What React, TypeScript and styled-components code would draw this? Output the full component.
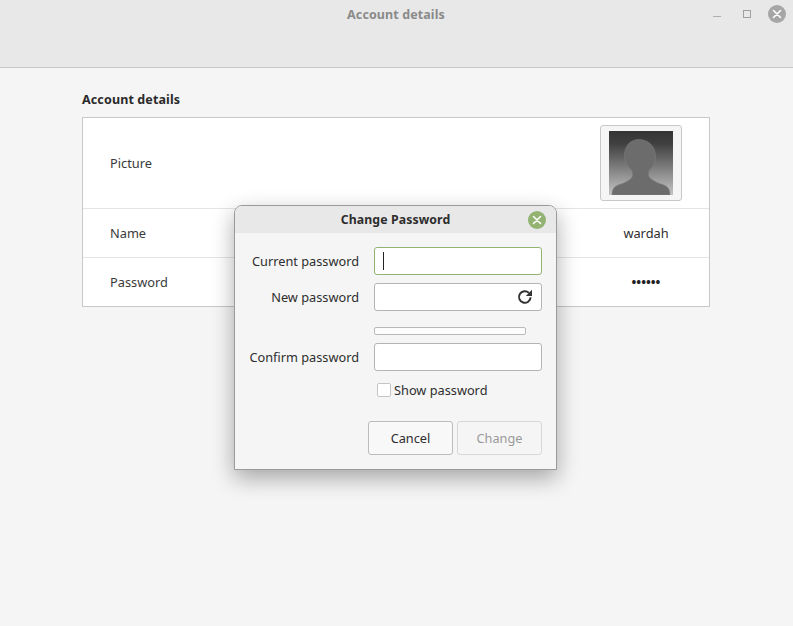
import React from "react";
import styled, { createGlobalStyle } from "styled-components";

const Global = createGlobalStyle`
  html, body { margin: 0; padding: 0; }
  body { font-family: "Noto Sans", "Open Sans", sans-serif; font-size: 13px; color: #2e2e2e; background: #f5f5f5; }
`;

const Page = styled.div`
  position: relative;
  width: 793px;
  height: 626px;
  overflow: hidden;
  background: #f5f5f5;
`;

const TitleBar = styled.header`
  height: 67px;
  background: #e8e8e8;
  border-bottom: 1px solid #c8c8c8;
  display: grid;
  grid-template-columns: 1fr auto 1fr;
  align-items: start;
`;

const WindowTitle = styled.div`
  grid-column: 2;
  margin-top: 6px;
  margin-right: 1px;
  font-weight: 700;
  font-size: 12.5px;
  line-height: 18px;
  letter-spacing: 0.1px;
  color: #8a8a8a;
`;

const WindowControls = styled.div`
  grid-column: 3;
  justify-self: end;
  display: flex;
  align-items: center;
  gap: 16px;
  margin: 5px 7px 0 0;
`;

const Content = styled.main`
  padding: 23px 83px 0 82px;
`;

const SectionTitle = styled.h2`
  margin: 0 0 8px;
  font-size: 12.5px;
  line-height: 18px;
  letter-spacing: 0.13px;
  font-weight: 700;
  color: #2a2a2a;
`;

const List = styled.section`
  background: #fff;
  border: 1px solid #c8c8c8;
`;

const Row = styled.div<{ $h: number }>`
  height: ${(p) => p.$h}px;
  display: flex;
  align-items: center;
  justify-content: space-between;
  padding: 0 27px;
  & + & { border-top: 1px solid #e4e4e4; }
`;

const RowLabel = styled.span`
  font-size: 12.8px;
  color: #3a3a3a;
`;

const RowValue = styled.span`
  width: 72px;
  text-align: center;
  font-size: 12.8px;
  color: #2e2e2e;
`;

const Dots = styled(RowValue)`
  font-weight: 700;
  color: #222;
`;

const AvatarButton = styled.div`
  width: 82px;
  height: 76px;
  box-sizing: border-box;
  border: 1px solid #c8c8c8;
  border-radius: 3px;
  background: #f5f5f5;
  display: flex;
  align-items: center;
  justify-content: center;
`;

const Dialog = styled.div`
  position: absolute;
  left: 234px;
  top: 205px;
  width: 323px;
  height: 265px;
  box-sizing: border-box;
  border: 1px solid #9a9a9a;
  border-radius: 8px 8px 0 0;
  background: #f5f5f5;
  box-shadow: 0 8px 22px rgba(0, 0, 0, 0.33);
  display: flex;
  flex-direction: column;
`;

const DialogHeader = styled.div`
  height: 27px;
  flex: none;
  background: #e8e8e8;
  border-radius: 7px 7px 0 0;
  position: relative;
  display: flex;
  align-items: center;
  justify-content: center;
  font-weight: 700;
  font-size: 12.3px;
  letter-spacing: 0.1px;
  color: #2e2e2e;
`;

const DialogClose = styled.svg`
  position: absolute;
  right: 10px;
  top: 5px;
`;

const Form = styled.div`
  display: grid;
  grid-template-columns: 124px 168px;
  column-gap: 15px;
  justify-content: start;
  padding: 14px 0 0 0;
  align-items: center;
`;

const Label = styled.label`
  text-align: right;
  font-size: 12.75px;
  color: #2e2e2e;
`;

const Input = styled.div<{ $focus?: boolean }>`
  position: relative;
  height: 28px;
  box-sizing: border-box;
  background: #fff;
  border: 1px solid ${(p) => (p.$focus ? "#92b372" : "#b4b4b4")};
  border-radius: 3px;
  display: flex;
  align-items: center;
  justify-content: space-between;
  padding: 0 8px;
`;

const Caret = styled.span`
  width: 1px;
  height: 18px;
  background: #222;
`;

const RowGap = styled.div<{ $h: number }>`
  grid-column: 1 / -1;
  height: ${(p) => p.$h}px;
`;

const Strength = styled.div`
  grid-column: 2;
  width: 152px;
  height: 8px;
  box-sizing: border-box;
  background: #fcfcfc;
  border: 1px solid #b9b9b9;
  border-radius: 2px;
`;

const CheckRow = styled.label`
  grid-column: 2;
  display: flex;
  align-items: center;
  gap: 3px;
  padding-left: 3px;
  font-size: 12.75px;
  color: #2e2e2e;
  height: 18px;
`;

const CheckBox = styled.span`
  width: 14px;
  height: 14px;
  box-sizing: border-box;
  background: #fff;
  border: 1px solid #c4c4c4;
  border-radius: 2px;
`;

const Actions = styled.div`
  display: flex;
  justify-content: flex-end;
  gap: 4px;
  padding: 22px 14px 0 0;
`;

const Button = styled.button<{ $disabled?: boolean }>`
  width: 85px;
  height: 34px;
  box-sizing: border-box;
  font-family: inherit;
  font-size: 12.75px;
  border-radius: 3px;
  border: 1px solid ${(p) => (p.$disabled ? "#d8d8d8" : "#bcbcbc")};
  color: ${(p) => (p.$disabled ? "#9a9a9a" : "#2e2e2e")};
  background: ${(p) => (p.$disabled ? "#f5f5f5" : "#f8f8f8")};
  padding: 0;
`;

export default function App() {
  return (
    <Page>
      <Global />
      <TitleBar>
        <WindowTitle>Account details</WindowTitle>
        <WindowControls>
          <svg width="10" height="10" viewBox="0 0 10 10"><rect x="1" y="7" width="8" height="1" fill="#b0b0b0" /></svg>
          <svg width="10" height="10" viewBox="0 0 10 10" style={{ marginLeft: 4 }}><rect x="1.5" y="1.5" width="7" height="7" fill="none" stroke="#a0a0a0" /></svg>
          <svg width="18" height="18" viewBox="0 0 18 18">
            <circle cx="9" cy="9" r="9" fill="#a6a6a6" />
            <path d="M5.5 5.5 L12.5 12.5 M12.5 5.5 L5.5 12.5" stroke="#fff" strokeWidth="1.6" strokeLinecap="round" />
          </svg>
        </WindowControls>
      </TitleBar>
      <Content>
        <SectionTitle>Account details</SectionTitle>
        <List>
          <Row $h={90}>
            <RowLabel>Picture</RowLabel>
            <AvatarButton>
              <svg width="64" height="64" viewBox="0 0 64 64">
                <defs>
                  <linearGradient id="bg" x1="0" y1="0" x2="0" y2="1">
                    <stop offset="0" stopColor="#343434" />
                    <stop offset="0.2" stopColor="#404040" />
                    <stop offset="1" stopColor="#c4c4c4" />
                  </linearGradient>
                </defs>
                <rect width="64" height="64" fill="url(#bg)" />
                <path
                  d="M30 8.5 C21 8.5 15.5 15 15.5 25 C15.5 31 19 36 23 39.5 L23.5 44 C23.5 47 20 50 12 53 C5 55 3 58 3 64 L61 64 C61 58 59 55 52 53 C44 50 40 47 39.5 44 L40 39.5 C44 36 46.5 31 46.5 25 C46.5 15 39 8.5 30 8.5 Z"
                  fill="#6c6c6c"
                  stroke="#808080"
                  strokeWidth="0.5"
                />
              </svg>
            </AvatarButton>
          </Row>
          <Row $h={48}>
            <RowLabel>Name</RowLabel>
            <RowValue>wardah</RowValue>
          </Row>
          <Row $h={48}>
            <RowLabel>Password</RowLabel>
            <Dots>••••••</Dots>
          </Row>
        </List>
      </Content>
      <Dialog>
        <DialogHeader>
          Change Password
          <DialogClose width="18" height="18" viewBox="0 0 18 18">
            <circle cx="9" cy="9" r="9" fill="#92b372" />
            <path d="M5.5 5.5 L12.5 12.5 M12.5 5.5 L5.5 12.5" stroke="#fff" strokeWidth="1.6" strokeLinecap="round" />
          </DialogClose>
        </DialogHeader>
        <Form>
          <Label>Current password</Label>
          <Input $focus><Caret /></Input>
          <RowGap $h={8} />
          <Label>New password</Label>
          <Input>
            <span />
            <svg width="16" height="16" viewBox="0 0 16 16" fill="none">
              <path d="M13.6 8.2 A5.8 5.8 0 1 1 11.9 3.9" stroke="#333" strokeWidth="2" />
              <path d="M15 0.8 V7 H8.8 Z" fill="#333" />
            </svg>
          </Input>
          <RowGap $h={16} />
          <Strength />
          <RowGap $h={8} />
          <Label>Confirm password</Label>
          <Input />
          <RowGap $h={10} />
          <CheckRow><CheckBox />Show password</CheckRow>
        </Form>
        <Actions>
          <Button>Cancel</Button>
          <Button $disabled>Change</Button>
        </Actions>
      </Dialog>
    </Page>
  );
}
